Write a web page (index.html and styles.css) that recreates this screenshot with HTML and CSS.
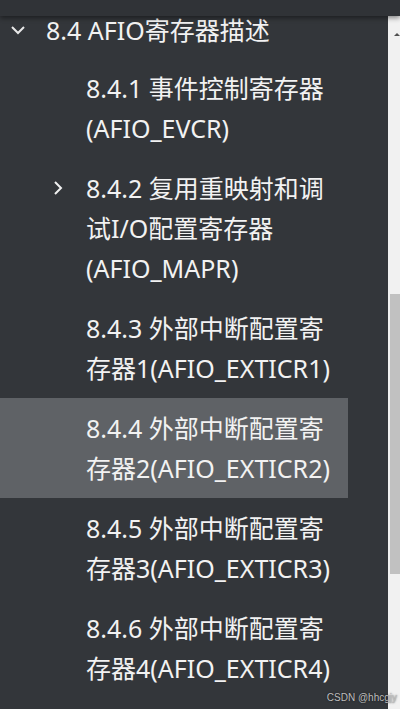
FILE: index.html
```html
<!DOCTYPE html>
<html lang="zh-CN">
<head>
  <meta charset="UTF-8">
  <title>AFIO寄存器目录</title>
  <link rel="stylesheet" href="styles.css">
</head>
<body>

  <div class="topbar"></div>

  <div class="main">
    <div class="toc">
      <div class="toc-head">
        <span class="arrow">
          <svg width="16" height="10" viewBox="0 0 16 10"><path d="M2 2 L8 8 L14 2" fill="none" stroke="#e8e8e8" stroke-width="2"/></svg>
        </span>
        <span class="label">8.4 AFIO寄存器描述</span>
      </div>

      <div class="toc-item">
        <span class="arrow"></span>
        <span class="label">8.4.1 事件控制寄存器(AFIO_EVCR)</span>
      </div>
      <div class="toc-item">
        <span class="arrow">
          <svg width="10" height="16" viewBox="0 0 10 16"><path d="M2 2 L8 8 L2 14" fill="none" stroke="#f0f0f0" stroke-width="2"/></svg>
        </span>
        <span class="label">8.4.2 复用重映射和调试I/O配置寄存器(AFIO_MAPR)</span>
      </div>
      <div class="toc-item">
        <span class="arrow"></span>
        <span class="label">8.4.3 外部中断配置寄存器1(AFIO_EXTICR1)</span>
      </div>
      <div class="toc-item active">
        <span class="arrow"></span>
        <span class="label">8.4.4 外部中断配置寄存器2(AFIO_EXTICR2)</span>
      </div>
      <div class="toc-item">
        <span class="arrow"></span>
        <span class="label">8.4.5 外部中断配置寄存器3(AFIO_EXTICR3)</span>
      </div>
      <div class="toc-item">
        <span class="arrow"></span>
        <span class="label">8.4.6 外部中断配置寄存器4(AFIO_EXTICR4)</span>
      </div>
    </div>

    <div class="scrollbar">
      <span class="scroll-up"></span>
      <div class="thumb"></div>
    </div>
  </div>

  <div class="watermark">CSDN @hhcgjy</div>

</body>
</html>
```

FILE: styles.css
```css
body {
  margin: 0;
  background-color: #33363a;
  font-family: "Noto Sans", "Noto Sans CJK SC", sans-serif;
  color: #f2f2f2;
  height: 709px;
  overflow: hidden;
}

.topbar {
  height: 16px;
  background-color: #303337;
  box-shadow: 0 2px 5px rgba(0,0,0,0.45);
  position: relative;
  z-index: 2;
}

.main {
  display: flex;
  height: 693px;
}

.toc {
  flex: 1;
  display: flex;
  flex-direction: column;
}

.toc-head {
  display: flex;
  align-items: center;
  padding: 0 0 14px 6px;
  line-height: 28px;
  font-size: 25px;
}

.toc-head .arrow {
  width: 40px;
  padding-left: 4px;
  box-sizing: border-box;
  display: flex;
}

.toc-item {
  display: flex;
  width: 348px;
  box-sizing: border-box;
  padding: 10px 10px 10px 46px;
  font-size: 25px;
  line-height: 40px;
}

.toc-item .arrow {
  flex: none;
  width: 40px;
  height: 40px;
  padding-left: 7px;
  box-sizing: border-box;
  display: flex;
  align-items: center;
}

.toc-item.active {
  background-color: #5f6266;
}

/* marca de agua encima de todo */
.watermark {
  position: absolute;
  right: 3px;
  bottom: 6px;
  font-family: "Liberation Sans", sans-serif;
  font-size: 10px;
  color: #bdbdbd;
  text-shadow: 0 0 2px rgba(0,0,0,0.6);
}

.scrollbar {
  width: 12px;
  background-color: #f1f1f1;
}

.scroll-up {
  display: block;
  margin: 17px 0 0 6px;
  width: 0;
  height: 0;
  border-left: 3px solid transparent;
  border-right: 3px solid transparent;
  border-bottom: 3px solid #505050;
}

.thumb {
  margin: 258px 0 0 2px;
  height: 280px;
  background-color: #c1c1c1;
}
```
